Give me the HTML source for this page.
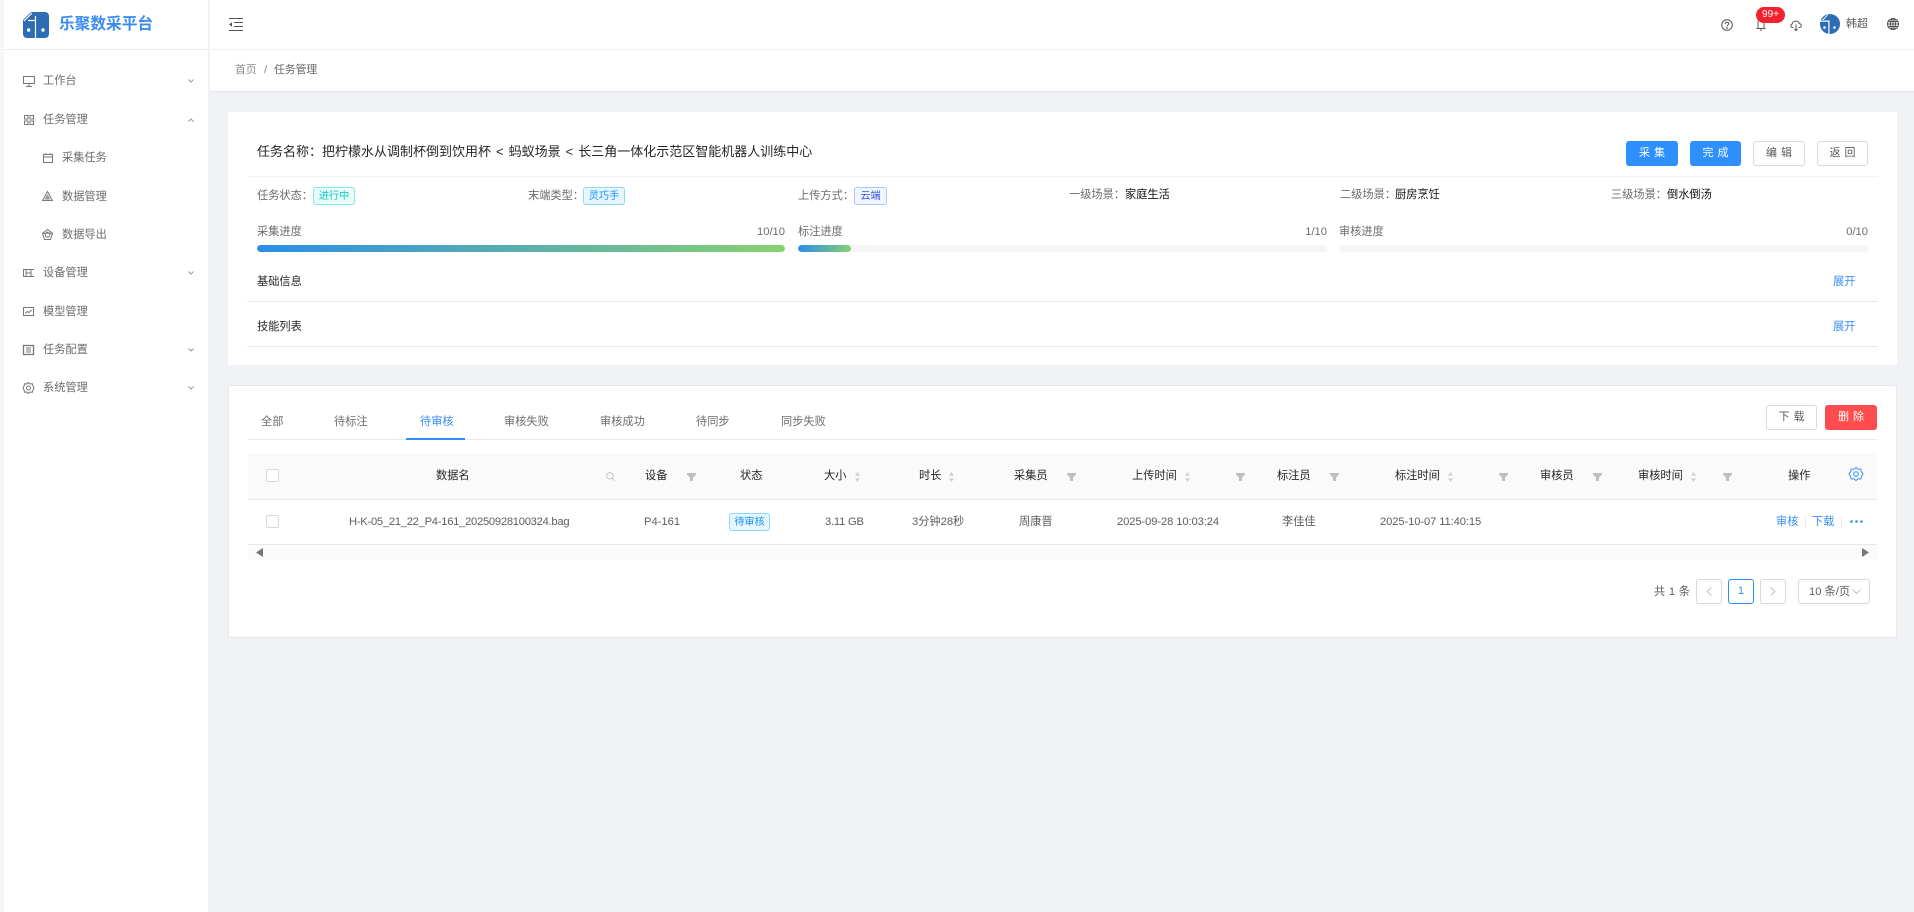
<!DOCTYPE html>
<html lang="zh">
<head>
<meta charset="utf-8">
<title>任务管理</title>
<style>
html,body{margin:0;padding:0;width:1914px;height:912px;overflow:hidden;background:#f0f2f5;}
body{position:relative;font-family:"Liberation Sans","Noto Sans CJK SC",sans-serif;font-size:11.2px;color:#666;}
.a{position:absolute;box-sizing:border-box;}
.t{position:absolute;white-space:nowrap;line-height:16px;height:16px;}
.m{color:#6c6c6c;}
.h{color:#262626;}
.r{color:#5e5e5e;}
.b{color:#3a8ef6;}
.v{color:#111;}
.tag{position:absolute;box-sizing:border-box;border-radius:3px;border:1px solid;text-align:center;line-height:17px;white-space:nowrap;font-size:10.2px;}
.btn{position:absolute;box-sizing:border-box;border-radius:3px;text-align:center;font-size:11px;letter-spacing:4px;text-indent:4px;line-height:25px;height:25px;white-space:nowrap;}
.pri{background:#2e8fff;color:#fff;}
.def{background:#fff;border:1px solid #d9d9d9;color:#595959;line-height:23px;}
.cb{position:absolute;width:13px;height:13px;box-sizing:border-box;border:1px solid #d9d9d9;border-radius:2px;background:#fff;}
.bar{position:absolute;height:7px;border-radius:4px;background:#f5f5f5;overflow:hidden;}
.fill{height:7px;border-radius:4px;background:linear-gradient(90deg,#2b8de9,#88d16f);}
.pg{position:absolute;box-sizing:border-box;top:579px;height:25px;border:1px solid #d9d9d9;border-radius:3px;background:#fff;text-align:center;line-height:23px;}
svg{position:absolute;overflow:visible;}
.ic{fill:none;stroke:#777;stroke-width:1;}
</style>
</head>
<body>
<svg width="0" height="0" style="position:absolute">
<defs>
<symbol id="fl" viewBox="0 0 9 8"><path d="M0 0H9V1.500L6 4.500V8H3V4.500L0 1.500Z" fill="#bfbfbf"/></symbol>
<symbol id="so" viewBox="0 0 5 10"><path d="M2.500 0L5 3.600H0Z M0 6.400H5L2.500 10Z" fill="#cfcfcf"/></symbol>
<symbol id="dn" viewBox="0 0 6 4"><path d="M.5.5L3 3 5.500.5" fill="none" stroke="#9a9a9a" stroke-width="1"/></symbol>
<symbol id="up" viewBox="0 0 6 4"><path d="M.5 3.500L3 1 5.500 3.500" fill="none" stroke="#9a9a9a" stroke-width="1"/></symbol>
</defs>
</svg>

<!-- sidebar -->
<div class="a" style="left:0;top:0;width:4px;height:912px;background:#f7f7f7;"></div>
<div class="a" style="left:4px;top:0;width:205px;height:912px;background:#fff;border-right:1px solid #f1f1f1;"></div>
<div class="a" style="left:4px;top:49px;width:205px;height:1px;background:#eee;"></div>

<svg style="left:23px;top:12px" width="26" height="26" viewBox="0 0 26 26">
<rect width="26" height="26" rx="4" fill="#2e6db4"/>
<path d="M0 0H8L0 8Z" fill="#fff"/>
<path d="M1 9L9 1" stroke="#fff" stroke-width="1.200" fill="none"/>
<path d="M5 8.500H12.500M12.500 4V26" stroke="#fff" stroke-width="1.200" fill="none"/>
<circle cx="5.700" cy="18" r="1.700" fill="#fff"/><circle cx="20" cy="18" r="1.700" fill="#fff"/>
</svg>
<div class="t" style="left:59px;top:15px;font-size:15.7px;line-height:20px;height:20px;font-weight:700;color:#3a8df0;">乐聚数采平台</div>

<svg class="ic" style="left:23px;top:76px" width="12" height="11" viewBox="0 0 12 11"><rect x=".5" y=".5" width="11" height="7"/><path d="M6 7.500V10M3 10.500H9"/></svg>
<div class="t m" style="left:43px;top:73px;">工作台</div>
<svg style="left:188px;top:79px" width="6" height="4"><use href="#dn"/></svg>

<svg class="ic" style="left:24px;top:115px" width="10" height="10" viewBox="0 0 10 10"><rect x=".5" y=".5" width="3.500" height="3.500"/><rect x="6" y=".5" width="3.500" height="3.500"/><rect x=".5" y="6" width="3.500" height="3.500"/><rect x="6" y="6" width="3.500" height="3.500"/></svg>
<div class="t m" style="left:43px;top:112px;">任务管理</div>
<svg style="left:188px;top:118px" width="6" height="4"><use href="#up"/></svg>

<svg class="ic" style="left:43px;top:153px" width="10" height="10" viewBox="0 0 10 10"><rect x=".5" y="1.500" width="9" height="8"/><path d="M.5 4H9.500M3 0V2M7 0V2"/></svg>
<div class="t m" style="left:62px;top:150px;">采集任务</div>

<svg style="left:42px;top:191px" width="11" height="10" viewBox="0 0 11 10"><path d="M5.500 .5L10.500 9.500H.5Z" fill="none" stroke="#777"/><path d="M5.500 3L8.500 8.500H2.500Z" fill="#999"/></svg>
<div class="t m" style="left:62px;top:189px;">数据管理</div>

<svg class="ic" style="left:42px;top:229px" width="11" height="11" viewBox="0 0 11 11"><path d="M5.500 .5L10.500 4.300 8.500 10.500H2.500L.5 4.300Z"/><path d="M5.500 3L8 5 7 8H4L3 5ZM.5 4.300H10.500"/></svg>
<div class="t m" style="left:62px;top:227px;">数据导出</div>

<svg class="ic" style="left:23px;top:269px" width="11" height="8" viewBox="0 0 11 8"><path d="M0 .5H11M0 7.500H11M.5 .5V7.500M3 .5V7.500M8 .5V7.500M3 4H8"/></svg>
<div class="t m" style="left:43px;top:265px;">设备管理</div>
<svg style="left:188px;top:271px" width="6" height="4"><use href="#dn"/></svg>

<svg class="ic" style="left:23px;top:307px" width="11" height="9" viewBox="0 0 11 9"><rect x=".5" y=".5" width="10" height="8"/><path d="M2 6.500L4.500 4.500 6 5.500 9 3"/></svg>
<div class="t m" style="left:43px;top:304px;">模型管理</div>

<svg class="ic" style="left:23px;top:345px" width="11" height="10" viewBox="0 0 11 10"><rect x=".5" y=".5" width="10" height="9" stroke-width="1.300"/><path d="M3 3H8M3 5H8M3 7H8"/></svg>
<div class="t m" style="left:43px;top:342px;">任务配置</div>
<svg style="left:188px;top:348px" width="6" height="4"><use href="#dn"/></svg>

<svg class="ic" style="left:23px;top:382px" width="11" height="12" viewBox="0 0 11 12"><path d="M5.500 .5L7 2l2.300-.3.700 2.300L11 6 10 8l-.7 2.300L7 10 5.500 11.500 4 10l-2.300.3L1 8 0 6l1-2 .7-2.300L4 2Z"/><circle cx="5.500" cy="6" r="2"/></svg>
<div class="t m" style="left:43px;top:380px;">系统管理</div>
<svg style="left:188px;top:386px" width="6" height="4"><use href="#dn"/></svg>

<!-- header -->
<div class="a" style="left:210px;top:0;width:1704px;height:49px;background:#fff;"></div>
<div class="a" style="left:210px;top:49px;width:1704px;height:1px;background:#efefef;"></div>
<div class="a" style="left:210px;top:50px;width:1704px;height:42px;background:#fff;border-bottom:1px solid #e6e6e6;"></div>

<svg style="left:229px;top:18px" width="14" height="13" viewBox="0 0 14 13"><path d="M0 .5H14M5 4.500H14M5 8.500H14M0 12.500H14" stroke="#555" stroke-width="1.100" fill="none"/><path d="M3 4.300V8.700L0 6.500Z" fill="#555"/></svg>

<svg class="ic" style="left:1721px;top:19px" width="12" height="12" viewBox="0 0 12 12"><circle cx="6" cy="6" r="5.300" stroke="#555"/><path d="M4.300 4.800C4.300 2.800 7.800 2.800 7.800 4.800 7.800 6 6 6 6 7.500" stroke="#555"/><circle cx="6" cy="9" r=".4" stroke="#555"/></svg>
<svg class="ic" style="left:1756px;top:19px" width="10" height="12" viewBox="0 0 10 12"><path d="M2 9.500V3.500Q2 1 5 1T8 3.500V9.500M.5 9.500H9.500M4 11H6" stroke="#555"/></svg>
<div class="a" style="left:1756px;top:7px;width:29px;height:16px;border-radius:8px;background:#f5222d;color:#fff;font-size:10px;line-height:16px;text-align:center;">99+</div>
<svg class="ic" style="left:1790px;top:20px" width="12" height="11" viewBox="0 0 12 11"><path d="M3.500 7.500H3C.5 7.500 0 4.500 2.300 4 2.500 .3 8.500 .3 9.200 3.500 11.500 3.500 12.500 7.500 9 7.500H8.500M6 4.500V10.500M4.500 9L6 10.500 7.500 9" stroke="#555"/></svg>

<svg style="left:1820px;top:14px" width="20" height="20" viewBox="0 0 20 20"><circle cx="10" cy="10" r="10" fill="#2e6db4"/><path d="M.5 6.500H9.500V20H8.300V7.700H0ZM2 6L7 1 8.500 .5 3.500 6Z" fill="#fff"/><circle cx="4.500" cy="13.500" r="1.300" fill="#fff"/><circle cx="14.500" cy="13.500" r="1.300" fill="#fff"/></svg>
<div class="t" style="left:1846px;top:16px;color:#595959;font-size:11px;">韩超</div>

<svg class="ic" style="left:1887px;top:18px" width="12" height="12" viewBox="0 0 12 12"><circle cx="6" cy="6" r="5.500" stroke="#555"/><ellipse cx="6" cy="6" rx="2.500" ry="5.500" stroke="#555"/><path d="M6 .5V11.500M.5 6H11.500M1.200 3.500H10.800M1.200 8.500H10.800" stroke="#555"/></svg>

<div class="t" style="left:235px;top:62px;color:#8c8c8c;font-size:10.8px;">首页</div>
<div class="t" style="left:264px;top:62px;color:#8c8c8c;">/</div>
<div class="t" style="left:274px;top:62px;color:#666;font-size:10.8px;">任务管理</div>

<!-- card 1 -->
<div class="a" style="left:228px;top:112px;width:1669px;height:253px;background:#fff;"></div>
<div class="t" style="left:257px;top:144px;font-size:13px;color:#262626;word-spacing:1.400px;">任务名称：把柠檬水从调制杯倒到饮用杯 &lt; 蚂蚁场景 &lt; 长三角一体化示范区智能机器人训练中心</div>
<div class="btn pri" style="left:1626px;top:141px;width:52px;">采集</div>
<div class="btn pri" style="left:1690px;top:141px;width:51px;">完成</div>
<div class="btn def" style="left:1753px;top:141px;width:52px;">编辑</div>
<div class="btn def" style="left:1817px;top:141px;width:51px;">返回</div>
<div class="a" style="left:247px;top:176px;width:1631px;height:1px;background:#f2f2f2;"></div>

<div class="t m" style="left:257px;top:188px;">任务状态：</div>
<div class="tag" style="left:313px;top:187px;width:42px;height:18px;color:#13c2c2;background:#e6fffb;border-color:#87e8de;">进行中</div>
<div class="t m" style="left:528px;top:188px;">末端类型：</div>
<div class="tag" style="left:583px;top:187px;width:42px;height:18px;color:#1890ff;background:#e6f7ff;border-color:#91d5ff;">灵巧手</div>
<div class="t m" style="left:798px;top:188px;">上传方式：</div>
<div class="tag" style="left:854px;top:187px;width:33px;height:18px;color:#2f54eb;background:#f0f5ff;border-color:#adc6ff;">云端</div>
<div class="t m" style="left:1069px;top:187px;">一级场景：</div><div class="t v" style="left:1125px;top:187px;">家庭生活</div>
<div class="t m" style="left:1340px;top:187px;">二级场景：</div><div class="t v" style="left:1395px;top:187px;">厨房烹饪</div>
<div class="t m" style="left:1611px;top:187px;">三级场景：</div><div class="t v" style="left:1667px;top:187px;">倒水倒汤</div>

<div class="t m" style="left:257px;top:224px;">采集进度</div>
<div class="t m" style="right:1129px;top:224px;">10/10</div>
<div class="bar" style="left:257px;top:245px;width:528px;"><div class="fill" style="width:100%"></div></div>
<div class="t m" style="left:798px;top:224px;">标注进度</div>
<div class="t m" style="right:587px;top:224px;">1/10</div>
<div class="bar" style="left:798px;top:245px;width:529px;"><div class="fill" style="width:10%"></div></div>
<div class="t m" style="left:1339px;top:224px;">审核进度</div>
<div class="t m" style="right:46px;top:224px;">0/10</div>
<div class="bar" style="left:1339px;top:245px;width:529px;"></div>

<div class="t" style="left:257px;top:274px;color:#262626;">基础信息</div>
<div class="t b" style="left:1833px;top:274px;">展开</div>
<div class="a" style="left:247px;top:301px;width:1631px;height:1px;background:#e8e8e8;"></div>
<div class="t" style="left:257px;top:319px;color:#262626;">技能列表</div>
<div class="t b" style="left:1833px;top:319px;">展开</div>
<div class="a" style="left:247px;top:346px;width:1631px;height:1px;background:#e8e8e8;"></div>

<!-- card 2 -->
<div class="a" style="left:228px;top:385px;width:1669px;height:253px;background:#fff;border:1px solid #e8e8e8;border-radius:2px;"></div>
<div class="t m" style="left:261px;top:414px;">全部</div>
<div class="t m" style="left:334px;top:414px;">待标注</div>
<div class="t b" style="left:420px;top:414px;">待审核</div>
<div class="t m" style="left:504px;top:414px;">审核失败</div>
<div class="t m" style="left:600px;top:414px;">审核成功</div>
<div class="t m" style="left:696px;top:414px;">待同步</div>
<div class="t m" style="left:781px;top:414px;">同步失败</div>
<div class="btn def" style="left:1766px;top:405px;width:51px;">下载</div>
<div class="btn" style="left:1825px;top:405px;width:52px;background:#ff4d4f;color:#fff;">删除</div>
<div class="a" style="left:248px;top:439px;width:1629px;height:1px;background:#e8e8e8;"></div>
<div class="a" style="left:406px;top:438px;width:59px;height:2px;background:#2e8fff;"></div>

<div class="a" style="left:248px;top:453px;width:1629px;height:47px;background:#fafafa;border-bottom:1px solid #e8e8e8;"></div>
<div class="cb" style="left:266px;top:469px;"></div>
<div class="t h" style="left:436px;top:468px;">数据名</div>
<svg class="ic" style="left:606px;top:472px" width="9" height="9" viewBox="0 0 9 9"><circle cx="3.800" cy="3.800" r="3.200" stroke="#c4c4c4"/><path d="M6 6L8.800 8.800" stroke="#c4c4c4"/></svg>
<div class="t h" style="left:645px;top:468px;">设备</div>
<svg style="left:687px;top:473px" width="9" height="8"><use href="#fl"/></svg>
<div class="t h" style="left:740px;top:468px;">状态</div>
<div class="t h" style="left:824px;top:468px;">大小</div>
<svg style="left:855px;top:472px" width="5" height="10"><use href="#so"/></svg>
<div class="t h" style="left:919px;top:468px;">时长</div>
<svg style="left:949px;top:472px" width="5" height="10"><use href="#so"/></svg>
<div class="t h" style="left:1014px;top:468px;">采集员</div>
<svg style="left:1067px;top:473px" width="9" height="8"><use href="#fl"/></svg>
<div class="t h" style="left:1132px;top:468px;">上传时间</div>
<svg style="left:1185px;top:472px" width="5" height="10"><use href="#so"/></svg>
<div class="t h" style="left:1277px;top:468px;">标注员</div>
<svg style="left:1330px;top:473px" width="9" height="8"><use href="#fl"/></svg>
<svg style="left:1236px;top:473px" width="9" height="8"><use href="#fl"/></svg>
<div class="t h" style="left:1395px;top:468px;">标注时间</div>
<svg style="left:1448px;top:472px" width="5" height="10"><use href="#so"/></svg>
<svg style="left:1499px;top:473px" width="9" height="8"><use href="#fl"/></svg>
<div class="t h" style="left:1540px;top:468px;">审核员</div>
<svg style="left:1593px;top:473px" width="9" height="8"><use href="#fl"/></svg>
<div class="t h" style="left:1638px;top:468px;">审核时间</div>
<svg style="left:1691px;top:472px" width="5" height="10"><use href="#so"/></svg>
<svg style="left:1723px;top:473px" width="9" height="8"><use href="#fl"/></svg>
<div class="t h" style="left:1788px;top:468px;">操作</div>
<svg class="ic" style="left:1849px;top:467px" width="14" height="14" viewBox="0 0 14 14"><path d="M7 .5L9 2.200 11.800 2 12.400 4.700 14 7 12.400 9.300 11.800 12 9 11.800 7 13.500 5 11.800 2.200 12 1.600 9.300 0 7 1.600 4.700 2.200 2 5 2.200Z" stroke="#3a8ef6"/><circle cx="7" cy="7" r="2.300" stroke="#3a8ef6"/></svg>

<div class="cb" style="left:266px;top:515px;"></div>
<div class="t r" style="left:349px;top:514px;letter-spacing:-.26px;">H-K-05_21_22_P4-161_20250928100324.bag</div>
<div class="t r" style="left:644px;top:514px;">P4-161</div>
<div class="tag" style="left:729px;top:513px;width:41px;height:18px;color:#1890ff;background:#e6f7ff;border-color:#91d5ff;">待审核</div>
<div class="t r" style="left:825px;top:514px;letter-spacing:-.2px;">3.11 GB</div>
<div class="t r" style="left:912px;top:514px;">3分钟28秒</div>
<div class="t r" style="left:1019px;top:514px;">周康晋</div>
<div class="t r" style="left:1117px;top:514px;letter-spacing:-.1px;">2025-09-28 10:03:24</div>
<div class="t r" style="left:1282px;top:514px;">李佳佳</div>
<div class="t r" style="left:1380px;top:514px;letter-spacing:-.1px;">2025-10-07 11:40:15</div>
<div class="t b" style="left:1776px;top:514px;">审核</div>
<div class="a" style="left:1805px;top:517px;width:1px;height:10px;background:#e8e8e8;"></div>
<div class="t b" style="left:1812px;top:514px;">下载</div>
<div class="a" style="left:1841px;top:517px;width:1px;height:10px;background:#e8e8e8;"></div>
<svg style="left:1850px;top:520px" width="13" height="3"><circle cx="1.500" cy="1.500" r="1.300" fill="#2e8fff"/><circle cx="6.500" cy="1.500" r="1.300" fill="#2e8fff"/><circle cx="11.500" cy="1.500" r="1.300" fill="#2e8fff"/></svg>

<div class="a" style="left:248px;top:544px;width:1629px;height:1px;background:#e8e8e8;"></div>
<div class="a" style="left:248px;top:545px;width:1629px;height:15px;background:#fbfbfb;"></div>
<svg style="left:256px;top:548px" width="7" height="9"><path d="M7 0V9L0 4.500Z" fill="#777"/></svg>
<svg style="left:1862px;top:548px" width="7" height="9"><path d="M0 0V9L7 4.500Z" fill="#777"/></svg>

<div class="t r" style="left:1654px;top:584px;letter-spacing:.3px;">共 1 条</div>
<div class="pg" style="left:1696px;width:26px;"></div>
<svg style="left:1706px;top:587px" width="6" height="9"><path d="M5.500 .5L1 4.500 5.500 8.500" fill="none" stroke="#bfbfbf"/></svg>
<div class="pg" style="left:1728px;width:26px;border-color:#2e8fff;color:#2e8fff;">1</div>
<div class="pg" style="left:1760px;width:26px;"></div>
<svg style="left:1770px;top:587px" width="6" height="9"><path d="M.5 .5L5 4.500 .5 8.500" fill="none" stroke="#bfbfbf"/></svg>
<div class="pg" style="left:1798px;width:72px;"></div>
<div class="t r" style="left:1809px;top:584px;">10 条/页</div>
<svg style="left:1852px;top:589px" width="9" height="5" viewBox="0 0 9 5"><path d="M.5.5L4.500 4.500 8.500.5" fill="none" stroke="#bfbfbf"/></svg>
</body>
</html>
